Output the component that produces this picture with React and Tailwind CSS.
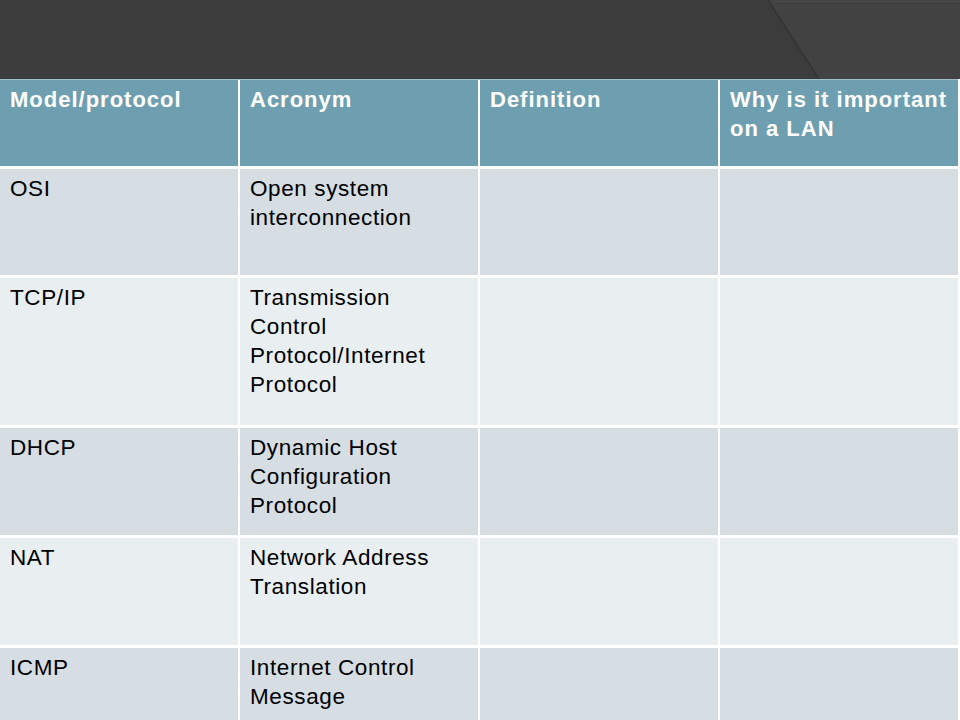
import React from 'react';

const rows = [
  { model: 'OSI', acronym: 'Open system interconnection', h: 'h-[106px]', bg: 'bg-[#d6dde3]' },
  { model: 'TCP/IP', acronym: 'Transmission Control Protocol/Internet Protocol', h: 'h-[147px]', bg: 'bg-[#e9eef1]' },
  { model: 'DHCP', acronym: 'Dynamic Host Configuration Protocol', h: 'h-[107px]', bg: 'bg-[#d6dde3]' },
  { model: 'NAT', acronym: 'Network Address Translation', h: 'h-[107px]', bg: 'bg-[#e9eef1]' },
  { model: 'ICMP', acronym: 'Internet Control Message', h: 'h-[107px]', bg: 'bg-[#d6dde3]' },
];

const headers = ['Model/protocol', 'Acronym', 'Definition', 'Why is it important on a LAN'];

const TitleBar = () => (
  <div className="relative h-[79px] bg-[#3c3c3c] overflow-hidden">
    <svg className="absolute inset-0" width="960" height="79" viewBox="0 0 960 79">
      <polygon points="768,0 960,0 960,79 819,79" fill="#424242" />
      <line x1="768" y1="0" x2="819" y2="79" stroke="#333333" strokeWidth="1.5" />
      <line x1="772" y1="1.5" x2="960" y2="1.5" stroke="#4a4a4a" strokeWidth="1" />
    </svg>
  </div>
);

const App = () => {
  return (
    <div className="w-[960px] h-[720px] overflow-hidden bg-white font-['Liberation_Sans',Arial,sans-serif]">
      <TitleBar />
      <div className="w-[958px] border-t border-[#9fbfca] grid grid-cols-[238px_238px_238px_238px] gap-x-[2px] bg-white">
        {headers.map((h) => (
          <div key={h} className="h-[86px] bg-[#6e9fb0] pl-[10px] pr-[3px] pt-[5px] text-white font-bold text-[22px] leading-[29px] tracking-[1px]">
            {h}
          </div>
        ))}
      </div>
      <div className="w-[958px] flex flex-col gap-y-[3px] pt-[3px] bg-white">
        {rows.map((r) => (
          <div key={r.model} className="grid grid-cols-[238px_238px_238px_238px] gap-x-[2px]">
            <div className={`${r.h} ${r.bg} pl-[10px] pr-[20px] pt-[5px] text-black text-[22.5px] leading-[29px] tracking-[0.6px]`}>{r.model}</div>
            <div className={`${r.h} ${r.bg} pl-[10px] pr-[20px] pt-[5px] text-black text-[22.5px] leading-[29px] tracking-[0.6px]`}>{r.acronym}</div>
            <div className={`${r.h} ${r.bg}`} />
            <div className={`${r.h} ${r.bg}`} />
          </div>
        ))}
      </div>
    </div>
  );
};

export default App;
